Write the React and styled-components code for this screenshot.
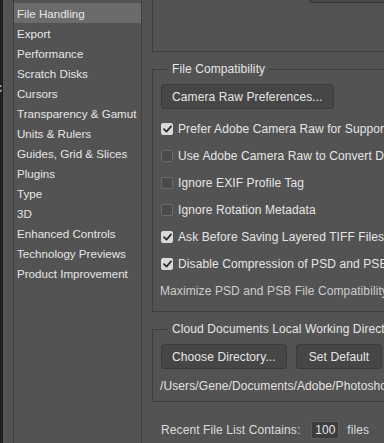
import React from "react";
import styled, { createGlobalStyle } from "styled-components";

const GlobalStyle = createGlobalStyle`
  html, body {
    margin: 0;
    padding: 0;
    background: #535353;
    font-family: "Liberation Sans", Arial, sans-serif;
    font-size: 12px;
    letter-spacing: 0.1px;
    color: #e4e4e4;
  }
`;

const sections = [
  "File Handling",
  "Export",
  "Performance",
  "Scratch Disks",
  "Cursors",
  "Transparency & Gamut",
  "Units & Rulers",
  "Guides, Grid & Slices",
  "Plugins",
  "Type",
  "3D",
  "Enhanced Controls",
  "Technology Previews",
  "Product Improvement",
];

const options = [
  { label: "Prefer Adobe Camera Raw for Supported Raw Files", checked: true },
  { label: "Use Adobe Camera Raw to Convert Documents from 32 bit to 16/8 bit", checked: false },
  { label: "Ignore EXIF Profile Tag", checked: false },
  { label: "Ignore Rotation Metadata", checked: false },
  { label: "Ask Before Saving Layered TIFF Files", checked: true },
  { label: "Disable Compression of PSD and PSB Files", checked: true },
];

function CheckIcon() {
  return (
    <svg width="9" height="8" viewBox="0 0 9 8">
      <path d="M1 4.2 L3.5 6.6 L8 1.4" fill="none" stroke="#2f2f2f" strokeWidth="1.8" strokeLinecap="round" strokeLinejoin="round" />
    </svg>
  );
}

function App() {
  return (
    <>
      <GlobalStyle />
      <Window>
        <BackStrip>
          <span>c</span>
          <span>t</span>
        </BackStrip>
        <Sidebar>
          {sections.map((s, i) => (
            <NavItem key={s} $active={i === 0}>
              {s}
            </NavItem>
          ))}
        </Sidebar>
        <Main>
          <TopGroup>
            <Dropdown />
          </TopGroup>
          <Group>
            <Legend>File Compatibility</Legend>
            <Button>Camera Raw Preferences...</Button>
            <Options>
              {options.map((o) => (
                <OptionRow key={o.label}>
                  <Box $checked={o.checked}>{o.checked && <CheckIcon />}</Box>
                  {o.label}
                </OptionRow>
              ))}
              <OptionRow $muted>Maximize PSD and PSB File Compatibility:</OptionRow>
            </Options>
          </Group>
          <Group>
            <Legend>Cloud Documents Local Working Directory</Legend>
            <ButtonRow>
              <Button>Choose Directory...</Button>
              <Button $wide>Set Default</Button>
            </ButtonRow>
            <PathText>/Users/Gene/Documents/Adobe/Photoshop Cloud Associates</PathText>
          </Group>
          <RecentRow>
            Recent File List Contains:
            <NumberField>100</NumberField>
            files
          </RecentRow>
        </Main>
      </Window>
    </>
  );
}

export default App;

const Window = styled.div`
  display: flex;
  width: 384px;
  height: 443px;
  overflow: hidden;
  gap: 10px;
`;

const BackStrip = styled.div`
  flex: 0 0 3px;
  background: #1f1f1f;
  overflow: hidden;
  display: flex;
  flex-direction: column;
  padding-top: 81px;
  gap: 22px;
  color: #cfcfcf;
  font-size: 12px;

  span {
    margin-left: -4px;
    line-height: 14px;
  }
`;

const Sidebar = styled.div`
  flex: 0 0 127px;
  border-left: 1px solid #3f3f3f;
  border-right: 1px solid #3f3f3f;
  padding-top: 3px;
  display: flex;
  flex-direction: column;
`;

const NavItem = styled.div`
  height: 20px;
  line-height: 22px;
  padding-left: 3px;
  font-size: 11.6px;
  letter-spacing: 0;
  white-space: nowrap;
  color: #e6e6e6;
  background: ${(p) => (p.$active ? "#6b6b6b" : "transparent")};
`;

const Main = styled.div`
  flex: 0 0 auto;
  width: 400px;
  display: flex;
  flex-direction: column;
`;

const TopGroup = styled.div`
  height: 51px;
  padding-left: 157px;
  border-left: 1px solid #3f3f3f;
  border-bottom: 1px solid #3f3f3f;
  display: flex;
  align-items: flex-start;
`;

const Dropdown = styled.div`
  width: 100px;
  height: 2px;
  background: #474747;
  border-left: 1px solid #363636;
  border-bottom: 1px solid #363636;
`;

const Group = styled.fieldset`
  margin: 10px 0 0 0;
  padding: 8px 0 7px 8px;
  border: 1px solid #3f3f3f;
  border-right: none;
  min-width: 0;
`;

const Legend = styled.legend`
  margin-left: 7px;
  padding: 0 4px;
  line-height: 14px;
  color: #e6e6e6;
`;

const Button = styled.div`
  display: inline-flex;
  align-items: center;
  height: 23px;
  padding: 0 ${(p) => (p.$wide ? "12px" : "10px")};
  background: #464646;
  border: 1px solid #3b3b3b;
  border-radius: 3px;
  color: #e6e6e6;
  white-space: nowrap;
  align-self: flex-start;
  width: max-content;
`;

const Options = styled.div`
  margin-top: 6px;
  display: flex;
  flex-direction: column;
`;

const OptionRow = styled.div`
  height: 27px;
  display: flex;
  align-items: center;
  gap: 5px;
  white-space: nowrap;
  color: ${(p) => (p.$muted ? "#cdcdcd" : "#e6e6e6")};
  margin-left: ${(p) => (p.$muted ? "-1px" : "0")};
`;

const Box = styled.span`
  box-sizing: border-box;
  flex: 0 0 12px;
  width: 12px;
  height: 12px;
  border-radius: 2px;
  display: flex;
  align-items: center;
  justify-content: center;
  background: ${(p) => (p.$checked ? "#d9d9d9" : "#4a4a4a")};
  border: 1px solid ${(p) => (p.$checked ? "#d9d9d9" : "#6a6a6a")};
`;

const ButtonRow = styled.div`
  display: flex;
  gap: 9px;
`;

const PathText = styled.div`
  height: 16px;
  line-height: 16px;
  margin: 9px 0 0 -1px;
  white-space: nowrap;
  color: #e2e2e2;
`;

const RecentRow = styled.div`
  margin-top: 19px;
  padding-left: 9px;
  display: flex;
  align-items: center;
  gap: 8px;
  white-space: nowrap;
  color: #dcdcdc;
`;

const NumberField = styled.span`
  box-sizing: border-box;
  width: 28px;
  height: 18px;
  margin-left: 3px;
  display: inline-flex;
  align-items: center;
  justify-content: center;
  background: #3d3d3d;
  border: 1px solid #5c5c5c;
  color: #e6e6e6;
`;
